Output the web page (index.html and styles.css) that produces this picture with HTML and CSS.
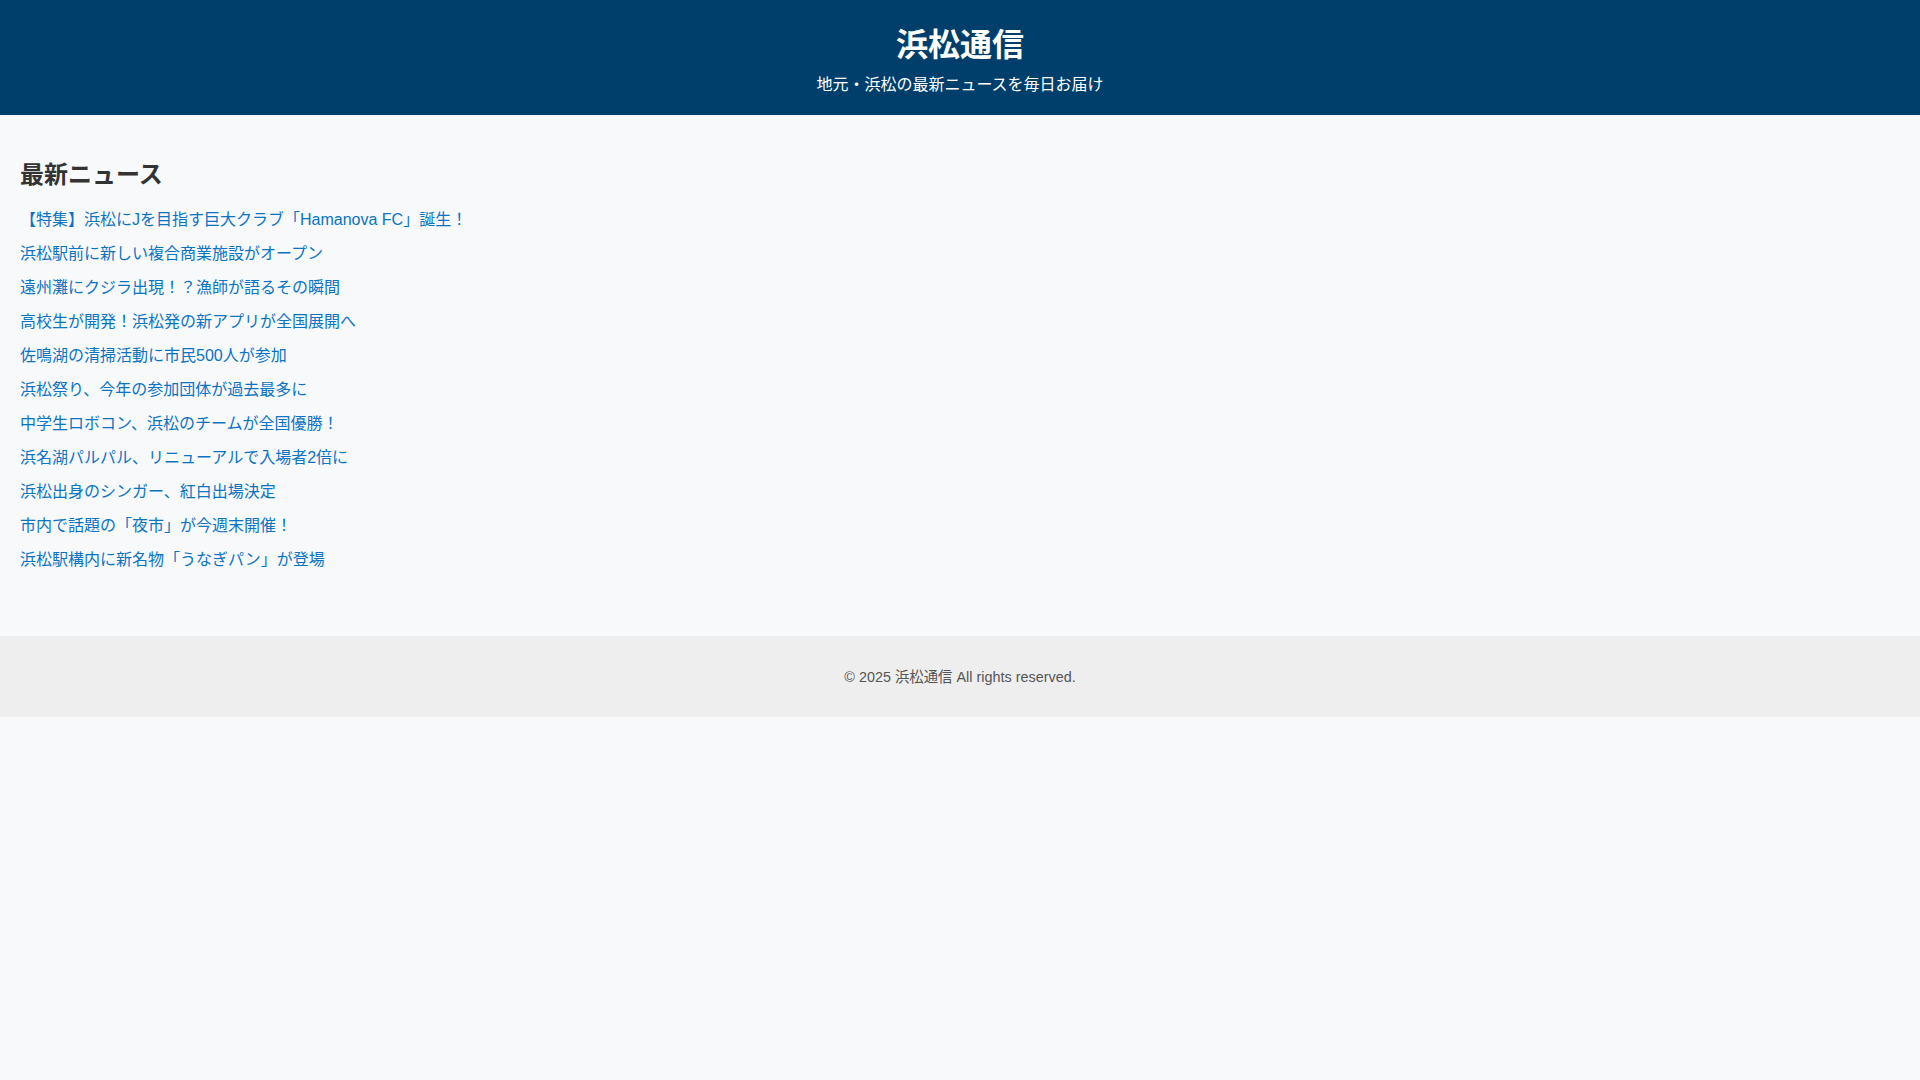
FILE: index.html
```html
<!DOCTYPE html>
<html lang="ja">

<head>
        <meta charset="UTF-8">
        <meta name="viewport" content="width=device-width, initial-scale=1.0">
        <title>浜松通信</title>
        <link rel="stylesheet" href="styles.css">
</head>

<body>
        <header class="site-header">
                <h1>浜松通信</h1>
                <p>地元・浜松の最新ニュースを毎日お届け</p>
        </header>

        <main class="news">
                <h2>最新ニュース</h2>
                <ul class="news-list">
                        <li><a href="#">【特集】浜松にJを目指す巨大クラブ「Hamanova FC」誕生！</a></li>
                        <li><a href="#">浜松駅前に新しい複合商業施設がオープン</a></li>
                        <li><a href="#">遠州灘にクジラ出現！？漁師が語るその瞬間</a></li>
                        <li><a href="#">高校生が開発！浜松発の新アプリが全国展開へ</a></li>
                        <li><a href="#">佐鳴湖の清掃活動に市民500人が参加</a></li>
                        <li><a href="#">浜松祭り、今年の参加団体が過去最多に</a></li>
                        <li><a href="#">中学生ロボコン、浜松のチームが全国優勝！</a></li>
                        <li><a href="#">浜名湖パルパル、リニューアルで入場者2倍に</a></li>
                        <li><a href="#">浜松出身のシンガー、紅白出場決定</a></li>
                        <li><a href="#">市内で話題の「夜市」が今週末開催！</a></li>
                        <li><a href="#">浜松駅構内に新名物「うなぎパン」が登場</a></li>
                </ul>
        </main>

        <footer class="site-footer">
                <p>&copy; 2025 浜松通信 All rights reserved.</p>
        </footer>
</body>

</html>
```

FILE: styles.css
```css
body {
        font-family: "Liberation Sans", "Noto Sans CJK JP", sans-serif;
        background-color: #f8f9fa;
        color: #333;
        margin: 0;
        padding: 0;
        line-height: 1.6;
}

.site-header {
        background-color: #003f6b;
        color: #fff;
        text-align: center;
        padding: 23px 20px 19px;
}

.site-header h1 {
        font-size: 2rem;
        margin: 0;
        line-height: 1.4;
}

.site-header p {
        font-size: 1rem;
        margin: 6px 0 0;
        line-height: 1.4;
}

.news {
        padding: 20px;
}

.news h2 {
        font-size: 1.5rem;
        margin: 23px 0 15px;
        line-height: 1.4;
}

.news-list {
        list-style: none;
        margin: 0 0 44px;
        padding: 0;
}

.news-list li {
        margin-bottom: 8.4px;
}

.news-list a {
        color: #0a74c4;
        text-decoration: none;
}

.site-footer {
        background-color: #eee;
        color: #555;
        text-align: center;
        padding: 30px 20px 28px;
}

.site-footer p {
        font-size: 0.9rem;
        margin: 0;
}
```
